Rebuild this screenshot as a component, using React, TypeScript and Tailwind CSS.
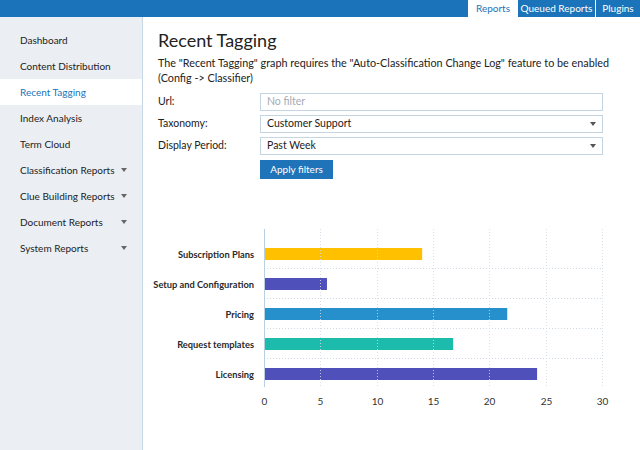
const navItems = [
  { label: "Dashboard" },
  { label: "Content Distribution" },
  { label: "Recent Tagging", active: true },
  { label: "Index Analysis" },
  { label: "Term Cloud" },
  { label: "Classification Reports", menu: true },
  { label: "Clue Building Reports", menu: true },
  { label: "Document Reports", menu: true },
  { label: "System Reports", menu: true },
];

const bars = [
  { label: "Subscription Plans", value: 13.95, color: "#ffc000" },
  { label: "Setup and Configuration", value: 5.5, color: "#4f50b9" },
  { label: "Pricing", value: 21.5, color: "#2590cc" },
  { label: "Request templates", value: 16.7, color: "#1dbbab" },
  { label: "Licensing", value: 24.15, color: "#4f50b9" },
];

// chart geometry, svg starts at the main column's left edge (x=143)
const X0 = 121;
const UNIT = 338 / 30;
const TOP = 50;
const ticks = [0, 5, 10, 15, 20, 25, 30];

function Caret({ className = "" }: { className?: string }) {
  return (
    <svg width="6" height="4" viewBox="0 0 6 4" className={className}>
      <path d="M0 0h6L3 4z" fill="currentColor" />
    </svg>
  );
}

function TaggingChart() {
  return (
    <svg width="497" height="240" className="block -ml-[15px]" style={{ fontFamily: "Lato, sans-serif" }}>
      {bars.map((b, i) => (
        <g key={b.label}>
          <rect x={X0 + 1} y={TOP + 19 + i * 30} width={b.value * UNIT} height={12} fill={b.color} />
          <text
            x={111}
            y={TOP + 28.5 + i * 30}
            textAnchor="end"
            fontSize="9.3"
            fontWeight="700"
            fill="#2a2a2a"
          >
            {b.label}
          </text>
        </g>
      ))}
      {[0, 1, 2, 3].map((i) => (
        <line
          key={i}
          x1={X0}
          x2={X0 + 338}
          y1={TOP + 39.5 + i * 30}
          y2={TOP + 39.5 + i * 30}
          stroke="#cfd9e3"
          strokeDasharray="1 2"
        />
      ))}
      {ticks.slice(1).map((t) => (
        <line
          key={t}
          x1={Math.round(X0 + t * UNIT) + 0.5}
          x2={Math.round(X0 + t * UNIT) + 0.5}
          y1={TOP}
          y2={TOP + 158}
          stroke="#d3dbe5"
          strokeOpacity="0.85"
          strokeDasharray="1 2"
        />
      ))}
      <line x1={X0 + 0.5} x2={X0 + 0.5} y1={TOP} y2={TOP + 158} stroke="#b9cfe2" />
      {ticks.map((t) => (
        <text
          key={t}
          x={Math.round(X0 + t * UNIT) + 0.5}
          y={TOP + 175.5}
          textAnchor="middle"
          fontSize="10"
          fill="#333"
        >
          {t}
        </text>
      ))}
    </svg>
  );
}

export default function App() {
  return (
    <div
      className="w-[640px] h-[450px] flex flex-col bg-white text-[#222] overflow-hidden"
      style={{ fontFamily: "Lato, 'Liberation Sans', sans-serif" }}
    >
      {/* Top bar */}
      <div className="h-[17px] bg-[#1b74ba] flex justify-end text-[10px] leading-[17px]">
        <div className="w-[50px] bg-white text-[#1b74ba] text-center">Reports</div>
        <div className="w-[78px] text-white text-center border-r border-white">Queued Reports</div>
        <div className="w-[44px] text-white text-center">Plugins</div>
      </div>

      <div className="flex flex-1">
        {/* Sidebar */}
        <div className="w-[143px] shrink-0 bg-[#ebeff3] border-r border-[#c8d7e5] pt-[10px]">
          {navItems.map((item) => (
            <div
              key={item.label}
              className={`h-[26px] flex items-center justify-between pl-5 pr-[15px] text-[10px] ${
                item.active ? "bg-white text-[#1b74ba]" : "text-[#222]"
              }`}
            >
              <span>{item.label}</span>
              {item.menu && <Caret className="text-[#666]" />}
            </div>
          ))}
        </div>

        {/* Main */}
        <div className="flex-1 pl-[15px] pt-[11px]">
          <h1 className="text-[18px] leading-6 font-normal text-[#222]">Recent Tagging</h1>
          <p className="mt-[3px] text-[10.8px] leading-[15px] text-[#222] pr-4">
            The "Recent Tagging" graph requires the "Auto-Classification Change Log" feature to be enabled
            (Config -&gt; Classifier)
          </p>

          <div className="mt-[8px] flex flex-col gap-[4px] text-[10.5px]">
            <div className="flex items-center h-[18px]">
              <span className="w-[102px]">Url:</span>
              <div className="w-[343px] h-[18px] border border-[#c6d5e2] px-[6px] flex items-center text-[#a3abb3]">
                No filter
              </div>
            </div>
            <div className="flex items-center h-[18px]">
              <span className="w-[102px]">Taxonomy:</span>
              <div className="w-[343px] h-[18px] border border-[#c6d5e2] pl-[6px] pr-[6px] flex items-center justify-between">
                <span>Customer Support</span>
                <Caret className="text-[#555]" />
              </div>
            </div>
            <div className="flex items-center h-[18px]">
              <span className="w-[102px]">Display Period:</span>
              <div className="w-[343px] h-[18px] border border-[#c6d5e2] pl-[6px] pr-[6px] flex items-center justify-between">
                <span>Past Week</span>
                <Caret className="text-[#555]" />
              </div>
            </div>
          </div>

          <button className="ml-[102px] mt-[3px] w-[73px] h-[19px] bg-[#1f73b9] text-white text-[10px] leading-[19px]">
            Apply filters
          </button>

          <TaggingChart />
        </div>
      </div>
    </div>
  );
}
